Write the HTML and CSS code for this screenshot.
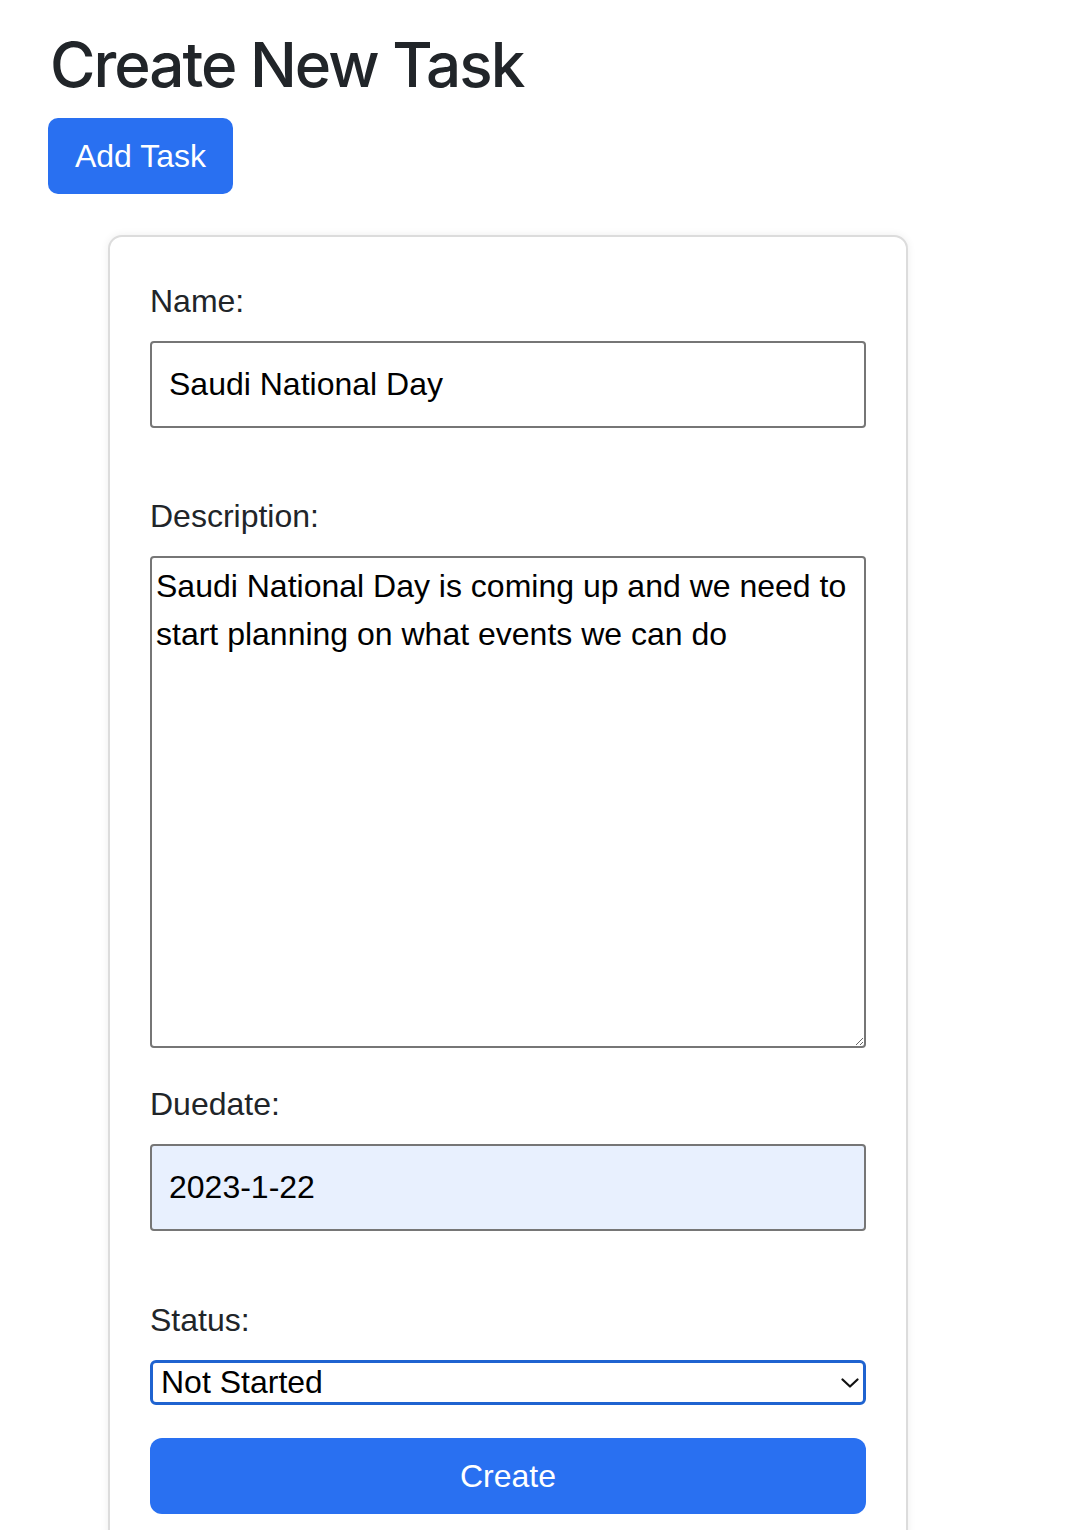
FILE: index.html
```html
<!DOCTYPE html>
<html lang="en">
<head>
<meta charset="utf-8">
<title>Create New Task</title>
<link rel="stylesheet" href="styles.css">
</head>
<body>
<div class="page">
  <h1 class="title">Create New Task</h1>
  <button class="btn btn-add" type="button">Add Task</button>

  <form class="card">
    <div class="field field-wide">
      <label class="label" for="name">Name:</label>
      <input class="control" id="name" type="text" value="Saudi National Day">
    </div>
    <div class="field">
      <label class="label" for="desc">Description:</label>
      <textarea class="control area" id="desc">Saudi National Day is coming up and we need to start planning on what events we can do</textarea>
    </div>
    <div class="field field-wide field-due">
      <label class="label" for="due">Duedate:</label>
      <input class="control autofill" id="due" type="text" value="2023-1-22">
    </div>
    <div class="field field-status">
      <label class="label" for="status">Status:</label>
      <div class="select-wrap">
        <select class="select" id="status">
          <option>Not Started</option>
          <option>In Progress</option>
          <option>Completed</option>
        </select>
        <svg class="chevron" width="18" height="10" viewBox="0 0 18 10" aria-hidden="true">
          <path d="M1.5 1.5 L9 8.5 L16.5 1.5" fill="none" stroke="#111" stroke-width="2.2" stroke-linecap="round" stroke-linejoin="round"/>
        </svg>
      </div>
    </div>
    <button class="btn btn-create" type="button">Create</button>
  </form>
</div>
</body>
</html>
```
FILE: styles.css
```css
* {
  box-sizing: border-box;
}

html, body {
  margin: 0;
  padding: 0;
  background: #ffffff;
}

body {
  font-family: "Liberation Sans", Arial, sans-serif;
  font-size: 32px;
  line-height: 48px;
  color: #212529;
}

.page {
  padding: 26px 0 0 48px;
}

.title {
  margin: 0;
  font-family: Inter, "Liberation Sans", sans-serif;
  font-weight: 500;
  font-size: 62px;
  line-height: 78px;
  letter-spacing: -2px;
  color: #212529;
  padding-left: 2px;
}

.btn {
  display: flex;
  align-items: center;
  justify-content: center;
  border: none;
  color: #ffffff;
  background: #2970f1;
  font-family: "Liberation Sans", Arial, sans-serif;
  font-size: 32px;
  line-height: 48px;
  cursor: pointer;
}

.btn-add {
  margin-top: 14px;
  width: 185px;
  height: 76px;
  border-radius: 10px;
  padding: 0;
}

.card {
  margin: 41px 0 0 60px;
  width: 800px;
  border: 2px solid #dcdcdc;
  border-radius: 14px;
  box-shadow: 0 0 8px rgba(0, 0, 0, 0.07);
  padding: 40px 40px 60px;
  background: #ffffff;
}

.field {
  margin-bottom: 32px;
}

.field-wide {
  margin-bottom: 64px;
}

.field-due {
  margin-bottom: 65px;
}

.field-status {
  margin-bottom: 33px;
}

.label {
  display: block;
  margin-bottom: 16px;
  font-size: 32px;
  line-height: 48px;
  color: #212529;
}

.control {
  display: block;
  width: 100%;
  height: 87px;
  border: 2px solid #767676;
  border-radius: 4px;
  padding: 0 17px;
  font-family: "Liberation Sans", Arial, sans-serif;
  font-size: 32px;
  line-height: 48px;
  color: #000000;
  background: #ffffff;
  outline: none;
}

.area {
  height: 492px;
  padding: 4px 4px;
  resize: vertical;
  overflow: hidden;
}

.autofill {
  background: #e8f0fe;
}

.select-wrap {
  position: relative;
}

.select {
  display: block;
  width: 100%;
  height: 45px;
  margin: 0;
  padding: 0 40px 0 8px;
  border: 3px solid #1f63d0;
  border-radius: 6px;
  background: #ffffff;
  font-family: "Liberation Sans", Arial, sans-serif;
  font-size: 32px;
  line-height: 39px;
  color: #000000;
  appearance: none;
  -webkit-appearance: none;
  outline: none;
}

.chevron {
  position: absolute;
  right: 7px;
  top: 18px;
  pointer-events: none;
}

.btn-create {
  width: 100%;
  height: 76px;
  border-radius: 12px;
  padding: 0;
}
```
